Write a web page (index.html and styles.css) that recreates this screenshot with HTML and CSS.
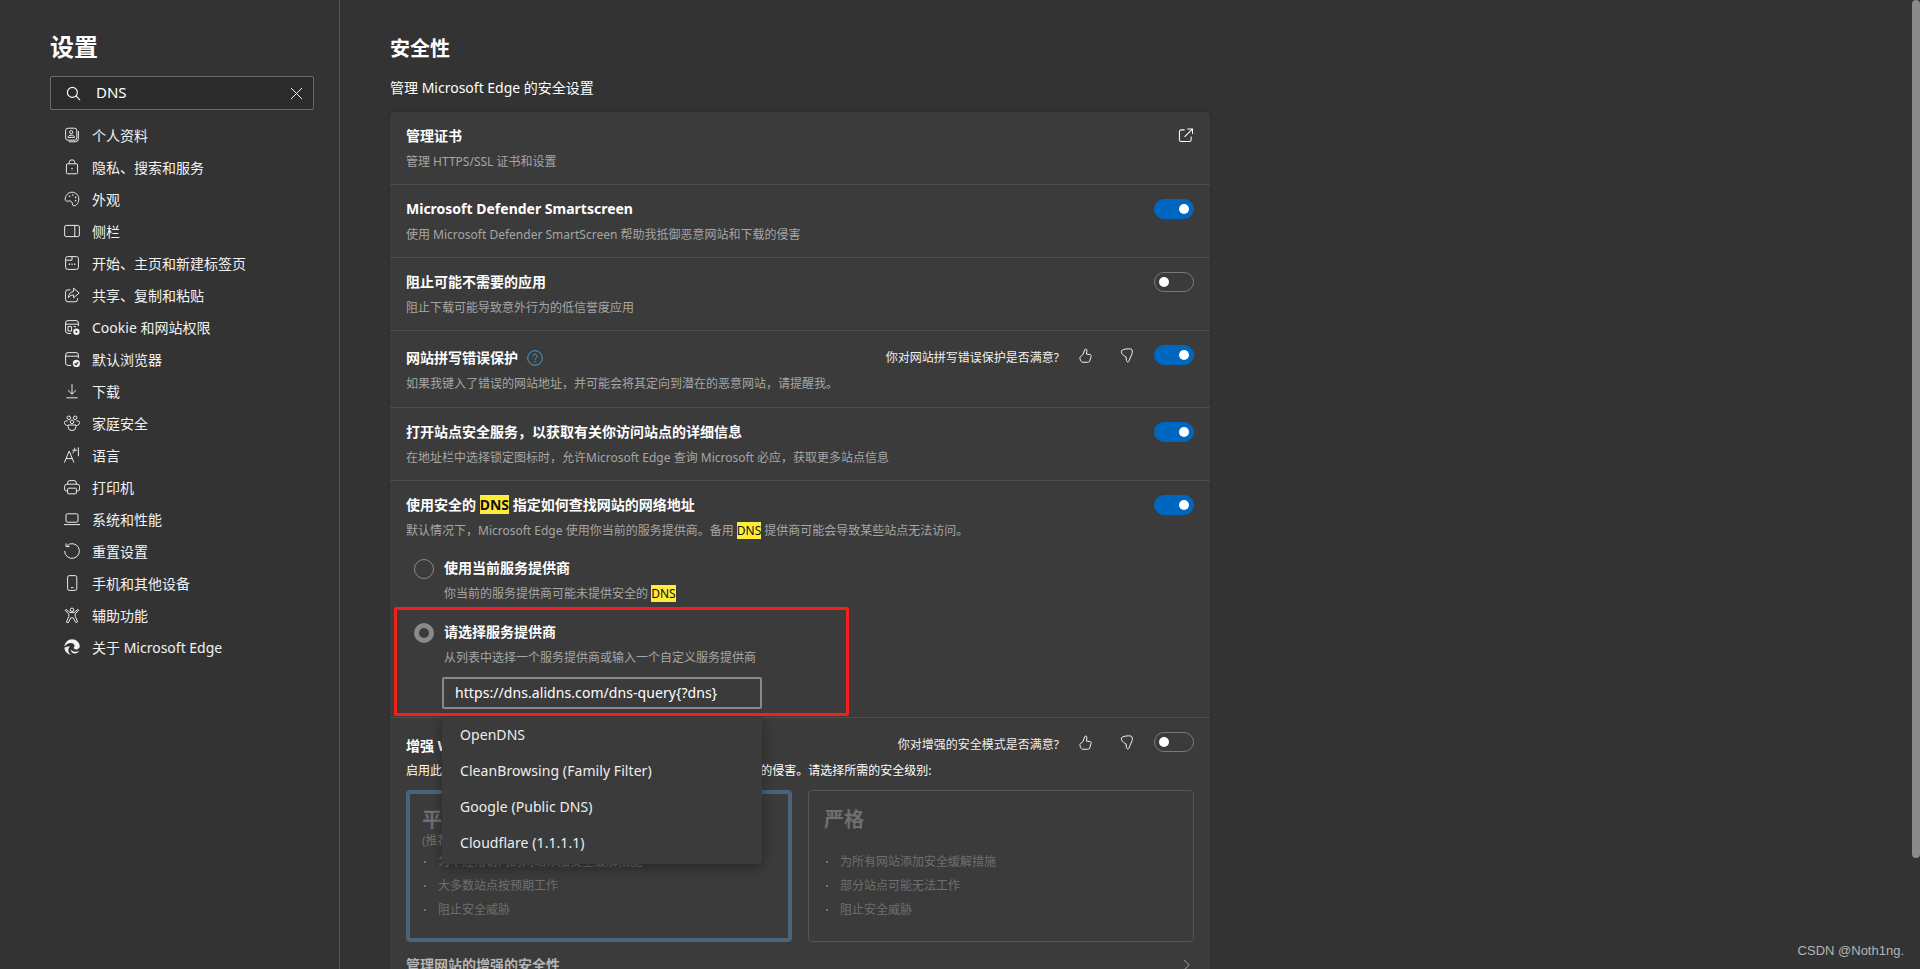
FILE: index.html
```html
<!DOCTYPE html>
<html lang="zh-CN">
  <head>
    <meta charset="UTF-8">
    <title>设置</title>
    <link rel="stylesheet" href="styles.css">
  </head>

  <body>
    <nav class="sidebar">
      <h1 class="sidebar-title">设置</h1>
      <div class="search">
        <svg class="search-icon" viewBox="0 0 16 16"><circle cx="6.8" cy="6.8" r="5.3"/><path d="M10.6 10.6 15 15"/></svg>
        <span class="search-text">DNS</span>
        <svg class="search-clear" viewBox="0 0 14 14"><path d="M1 1 13 13M13 1 1 13"/></svg>
      </div>
      <ul class="menu">
        <li class="menu-item"><svg class="menu-icon" viewBox="0 0 20 20"><rect x="2" y="1.5" width="14" height="15" rx="3"/><path d="M18 5v9.5a4 4 0 0 1-4 4H6"/><circle cx="9" cy="6.5" r="2"/><path d="M5 13c0-2 1.5-2.7 4-2.7s4 .7 4 2.7z"/></svg>个人资料</li>
        <li class="menu-item"><svg class="menu-icon" viewBox="0 0 20 20"><rect x="3" y="6" width="14" height="12.5" rx="1.5"/><path d="M6.5 6V4.5a3.5 3.5 0 0 1 7 0V6"/><circle cx="10" cy="12.2" r="1" class="solid"/></svg>隐私、搜索和服务</li>
        <li class="menu-item"><svg class="menu-icon" viewBox="0 0 20 20"><path d="M10 1.5c4.7 0 8.500 3.800 8.500 8.500 0 4.700-3 8.500-6 8.500-2 0-1.800-2-2.200-3.500C9.800 13 8 12 6 12.500c-2.500.6-4.500.3-4.500-2.200C1.500 5.500 5.300 1.500 10 1.500z"/><circle cx="7" cy="6.5" r="1" class="solid"/><circle cx="11" cy="5" r="1" class="solid"/><circle cx="14.5" cy="8" r="1" class="solid"/><circle cx="14.5" cy="12" r="1" class="solid"/></svg>外观</li>
        <li class="menu-item"><svg class="menu-icon" viewBox="0 0 20 20"><rect x=".8" y="3" width="18.4" height="14" rx="2"/><path d="M13.5 3v14"/></svg>侧栏</li>
        <li class="menu-item"><svg class="menu-icon" viewBox="0 0 20 20"><rect x="2" y="2" width="16" height="16" rx="2.5"/><path d="M2.5 6.5h7.5V2"/><path d="M6 11.5h1.5M9.3 11.5h1.5M12.6 11.5h1.5" class="thick"/></svg>开始、主页和新建标签页</li>
        <li class="menu-item"><svg class="menu-icon" viewBox="0 0 20 20"><path d="M8 3.5H5A3 3 0 0 0 2 6.500v9a3 3 0 0 0 3 3h9a3 3 0 0 0 3-3V14"/><path d="M12 1.500l7 6-7 6v-3.500c-3 0-5 1-6.500 3.500C5.500 9 8 6 12 5.500z"/></svg>共享、复制和粘贴</li>
        <li class="menu-item"><svg class="menu-icon" viewBox="0 0 20 20"><path d="M9 18H5a3 3 0 0 1-3-3V5a3 3 0 0 1 3-3h10a3 3 0 0 1 3 3v4"/><path d="M2 6.5h16"/><path d="M5 9.5h4.5v5.500H5zM12 9.5h3"/><circle cx="15.5" cy="16" r="4" class="solid"/><circle cx="15.5" cy="16" r="1.3" class="hole"/></svg>Cookie 和网站权限</li>
        <li class="menu-item"><svg class="menu-icon" viewBox="0 0 20 20"><path d="M9 18H5a3 3 0 0 1-3-3V5a3 3 0 0 1 3-3h10a3 3 0 0 1 3 3v4"/><path d="M2 6.5h16"/><circle cx="15.5" cy="15.5" r="4.5" class="solid"/><path d="M13.3 15.5l1.7 1.7 2.7-3.2" class="dark"/></svg>默认浏览器</li>
        <li class="menu-item"><svg class="menu-icon" viewBox="0 0 20 20"><path d="M10 1.5V14M5 9l5 5 5-5M3 18.5h14"/></svg>下载</li>
        <li class="menu-item"><svg class="menu-icon" viewBox="0 0 20 20"><circle cx="6" cy="3.5" r="2.2"/><circle cx="14" cy="3.5" r="2.2"/><circle cx="10" cy="8.5" r="2.2"/><path d="M4.5 7.5H2.5C1.200 7.500.5 8.300.5 9.500.5 12 2.500 13 4.500 13M15.500 7.500h2c1.300 0 2 .8 2 2 0 2.500-2 3.500-4 3.500"/><path d="M5 12.5h10v2a5 5 0 0 1-10 0z"/></svg>家庭安全</li>
        <li class="menu-item"><svg class="menu-icon" viewBox="0 0 20 20"><path d="M.5 19.5 6.500 5l6 14.500M2.500 14.500h8"/><path d="M10.5 4h6M13.500 1c0 3-1 5-3 7M18 .5v11"/></svg>语言</li>
        <li class="menu-item"><svg class="menu-icon" viewBox="0 0 20 20"><path d="M4.5 6.500V5A3 3 0 0 1 7.500 2h5a3 3 0 0 1 3 3v1.500"/><path d="M4.500 15H3a2.500 2.500 0 0 1-2.300-2.500V9.500A3 3 0 0 1 3.500 6.500h13a3 3 0 0 1 3 3v3a2.500 2.500 0 0 1-2.500 2.500h-1.500"/><rect x="4.5" y="11.5" width="11" height="7" rx="1"/></svg>打印机</li>
        <li class="menu-item"><svg class="menu-icon" viewBox="0 0 20 20"><rect x="2.5" y="3.5" width="15" height="10.5" rx="1.5"/><path d="M0 17h20"/></svg>系统和性能</li>
        <li class="menu-item"><svg class="menu-icon" viewBox="0 0 20 20"><path d="M3.5 3.500A9.200 9.200 0 1 1 .8 10"/><path d="M2.5.5v4H7"/></svg>重置设置</li>
        <li class="menu-item"><svg class="menu-icon" viewBox="0 0 20 20"><rect x="4.5" y=".8" width="11.5" height="18.4" rx="2"/><path d="M8.5 15.8h3.5"/></svg>手机和其他设备</li>
        <li class="menu-item"><svg class="menu-icon" viewBox="0 0 20 20"><circle cx="10" cy="3.5" r="2.2"/><path d="M2.5 3l5 4h5l5-4 1 1.200-4.500 4.300v3l3 7-2.200 1L11.500 13.500h-3l-3.300 6.500-2.200-1 3-7v-3L1.500 4.200z"/></svg>辅助功能</li>
        <li class="menu-item"><svg class="menu-icon edge" viewBox="0 0 20 20"><path d="M10 .3C15.500.3 19.700 4.500 19.700 9c0 2.500-2 4-4.500 4-1.500 0-3-.7-3-2 0-1 1-1.200 1-2.500C13.200 6.500 11 5 8.500 5 5.500 5 2.500 7 .5 9.500 1 4.500 5 .3 10 .3z"/><path d="M.5 11C.8 16 5 19.700 9.500 19.700c-3-1-4.500-3.500-4-6.500.2-1.500 1-3 2-4C4.500 9.500 2 10 .5 11z"/><path d="M8.500 13c0 3.500 3 5.500 6 5 2-.4 3.700-1.500 4.700-3-1.500 1-3.700 1.200-5.700.8-2-.4-4-1.300-5-2.800z"/></svg>关于 Microsoft Edge</li>
      </ul>
    </nav>

    <main class="content">
      <h2 class="page-title">安全性</h2>
      <p class="page-sub">管理 Microsoft Edge 的安全设置</p>

      <section class="card">
        <div class="row">
          <div class="row-text">
            <div class="row-title">管理证书</div>
            <div class="row-desc">管理 HTTPS/SSL 证书和设置</div>
          </div>
          <svg class="open-icon" viewBox="0 0 16 16"><path d="M7 2H3.500A2 2 0 0 0 1.500 4v8.500a2 2 0 0 0 2 2H12a2 2 0 0 0 2-2V9"/><path d="M7 9.500 15 1.500M10 1h5.500v5.500"/></svg>
        </div>

        <div class="row">
          <div class="row-text">
            <div class="row-title">Microsoft Defender Smartscreen</div>
            <div class="row-desc">使用 Microsoft Defender SmartScreen 帮助我抵御恶意网站和下载的侵害</div>
          </div>
          <div class="toggle on"></div>
        </div>

        <div class="row">
          <div class="row-text">
            <div class="row-title">阻止可能不需要的应用</div>
            <div class="row-desc">阻止下载可能导致意外行为的低信誉度应用</div>
          </div>
          <div class="toggle"></div>
        </div>

        <div class="row row-tall">
          <div class="row-text">
            <div class="row-title">网站拼写错误保护
              <svg class="help-icon" viewBox="0 0 16 16"><circle cx="8" cy="8" r="7.3"/><path d="M5.8 6.2C5.800 5 6.800 4.200 8 4.200s2.200.8 2.200 2c0 1.800-2.200 1.800-2.200 3.600"/><circle cx="8" cy="11.8" r=".7" class="help-dot"/></svg>
            </div>
            <div class="row-desc">如果我键入了错误的网站地址，并可能会将其定向到潜在的恶意网站，请提醒我。</div>
          </div>
          <div class="feedback">
            <span class="feedback-text">你对网站拼写错误保护是否满意?</span>
            <svg class="thumb" viewBox="0 0 14 16"><path d="M1 10 4.500 6.500 6 2C6.500.5 8.500.8 8.500 2.500L8 6.500l4 .5c1 .2 1.300 1 1 2l-1.500 5c-.3 1-1 1.300-2.500 1.300H4C2 15 1 12.500 1 10z"/></svg>
            <svg class="thumb" viewBox="0 0 14 16"><path d="M1.500 3C3 1 9 .5 12 1c1.500 1 1.500 3 1 5l-3 7c-.5 2.500-2.500 2.500-3 .5L6.500 9.500C4 8.500 1 6 1.500 3z"/></svg>
          </div>
          <div class="toggle on"></div>
        </div>

        <div class="row">
          <div class="row-text">
            <div class="row-title">打开站点安全服务，以获取有关你访问站点的详细信息</div>
            <div class="row-desc">在地址栏中选择锁定图标时，允许Microsoft Edge 查询 Microsoft 必应，获取更多站点信息</div>
          </div>
          <div class="toggle on"></div>
        </div>

        <div class="row row-dns">
          <div class="dns-head">
            <div class="row-text">
              <div class="row-title">使用安全的 <mark class="hit">DNS</mark> 指定如何查找网站的网络地址</div>
              <div class="row-desc">默认情况下，Microsoft Edge 使用你当前的服务提供商。备用 <mark class="hit">DNS</mark> 提供商可能会导致某些站点无法访问。</div>
            </div>
            <div class="toggle on"></div>
          </div>

          <div class="option">
            <div class="radio"></div>
            <div class="row-text">
              <div class="row-title">使用当前服务提供商</div>
              <div class="row-desc">你当前的服务提供商可能未提供安全的 <mark class="hit">DNS</mark></div>
            </div>
          </div>

          <div class="option">
            <div class="radio checked"></div>
            <div class="row-text">
              <div class="row-title">请选择服务提供商</div>
              <div class="row-desc">从列表中选择一个服务提供商或输入一个自定义服务提供商</div>
              <div class="dns-input">https://dns.alidns.com/dns-query{?dns}</div>
            </div>
          </div>
        </div>

        <div class="row-enhance">
          <div class="enhance-head">
            <div class="row-title">增强 Web 安全性</div>
            <div class="feedback">
              <span class="feedback-text">你对增强的安全模式是否满意?</span>
              <svg class="thumb" viewBox="0 0 14 16"><path d="M1 10 4.500 6.500 6 2C6.500.5 8.500.8 8.500 2.500L8 6.500l4 .5c1 .2 1.300 1 1 2l-1.500 5c-.3 1-1 1.300-2.500 1.300H4C2 15 1 12.500 1 10z"/></svg>
              <svg class="thumb" viewBox="0 0 14 16"><path d="M1.500 3C3 1 9 .5 12 1c1.500 1 1.500 3 1 5l-3 7c-.5 2.500-2.500 2.500-3 .5L6.500 9.500C4 8.500 1 6 1.500 3z"/></svg>
            </div>
            <div class="toggle"></div>
          </div>
          <p class="enhance-desc">启用此功能可帮助保护你的计算机免受来自 网络 的侵害和恶意软件的侵害。请选择所需的安全级别:</p>
          <div class="levels">
            <div class="level selected">
              <div class="level-name">平衡</div>
              <div class="level-tag">(推荐)</div>
              <ul class="level-list">
                <li>为不经常访问的网站添加安全缓解措施</li>
                <li>大多数站点按预期工作</li>
                <li>阻止安全威胁</li>
              </ul>
            </div>
            <div class="level">
              <div class="level-name">严格</div>
              <ul class="level-list level-list-strict">
                <li>为所有网站添加安全缓解措施</li>
                <li>部分站点可能无法工作</li>
                <li>阻止安全威胁</li>
              </ul>
            </div>
          </div>
        </div>

        <div class="row-manage">
          <span>管理网站的增强的安全性</span>
          <svg class="chevron" viewBox="0 0 8 14"><path d="M1 1l6 6-6 6"/></svg>
        </div>
      </section>
    </main>

    <!-- things lying over the page -->
    <ul class="dropdown">
      <li>OpenDNS</li>
      <li>CleanBrowsing (Family Filter)</li>
      <li>Google (Public DNS)</li>
      <li>Cloudflare (1.1.1.1)</li>
    </ul>
    <div class="red-box"></div>
    <div class="scrollbar"><div class="scroll-thumb"></div></div>
    <div class="watermark">CSDN @Noth1ng.</div>
  </body>
</html>
```

FILE: styles.css
```css
html, body {
  margin: 0;
  height: 969px;
  overflow: hidden;
}

body {
  position: relative;
  display: flex;
  background-color: #333333;
  color: #ffffff;
  font-family: "Noto Sans", "Noto Sans CJK SC", sans-serif;
  font-size: 14px;
}

svg {
  fill: none;
  stroke: currentColor;
  stroke-width: 1.2;
  flex: none;
}

ul, p, h1, h2 {
  margin: 0;
  padding: 0;
  list-style: none;
}

/* sidebar */
.sidebar {
  width: 340px;
  height: 100%;
  flex: none;
  box-sizing: border-box;
  padding: 30px 0 0 50px;
  border-right: 1px solid #555555;
}

.sidebar-title {
  font-size: 24px;
  font-weight: 700;
  line-height: 34px;
}

.search {
  width: 264px;
  height: 34px;
  margin-top: 12px;
  box-sizing: border-box;
  display: flex;
  align-items: center;
  padding: 0 10px 0 15px;
  background-color: #2b2b2b;
  border: 1px solid #6b6b6b;
  border-radius: 2px;
}

.search-icon {
  width: 15px;
  height: 15px;
}

.search-text {
  margin-left: 15px;
  flex: 1;
  font-size: 15px;
  line-height: 20px;
  margin-top: -2px;
}

.search-clear {
  width: 13px;
  height: 13px;
  stroke-width: 1;
}

.menu {
  margin-top: 9px;
  margin-left: -50px;
}

.menu-item {
  height: 32px;
  display: flex;
  align-items: center;
  padding-left: 64px;
  gap: 12px;
  color: #f2f2f2;
}

.menu-icon {
  width: 16px;
  height: 16px;
  stroke-width: 1.2;
}

.menu-icon .solid {
  fill: currentColor;
  stroke: none;
}

.menu-icon .hole {
  fill: #333333;
  stroke: none;
}

.menu-icon .dark {
  stroke: #333333;
  stroke-width: 1.5;
}

.menu-icon .thick {
  stroke-width: 1.8;
}

.edge path {
  fill: currentColor;
  stroke: none;
}

/* main column */
.content {
  margin-left: 50px;
  width: 820px;
  flex: none;
}

.page-title {
  margin-top: 34px;
  font-size: 20px;
  font-weight: 700;
  line-height: 30px;
}

.page-sub {
  margin-top: 14px;
  line-height: 20px;
}

.card {
  margin-top: 14px;
  background-color: #3b3b3b;
  border-radius: 4px;
  box-shadow: 0 0 3px rgba(0, 0, 0, 0.2);
}

.row {
  height: 73px;
  box-sizing: border-box;
  display: flex;
  align-items: flex-start;
  padding: 14px 16px 0;
  border-bottom: 1px solid #4d4d4d;
}

.row-text {
  flex: 1;
  min-width: 0;
}

.row-title {
  font-weight: 700;
  line-height: 20px;
  color: #ffffff;
}

.row-desc {
  margin-top: 6px;
  font-size: 12px;
  line-height: 20px;
  color: #a6a6a6;
}

.row-tall {
  height: 77px;
}

.row-tall .row-title {
  margin-top: 3px;
}

.hit {
  background-color: #ffeb3b;
  color: #111111;
}

.toggle {
  position: relative;
  width: 40px;
  height: 20px;
  flex: none;
  box-sizing: border-box;
  border: 1px solid #7a7a7a;
  border-radius: 10px;
}

.toggle::after {
  content: "";
  position: absolute;
  left: 4px;
  top: 4px;
  width: 10px;
  height: 10px;
  border-radius: 50%;
  background-color: #ffffff;
}

.toggle.on {
  background-color: #0067c0;
  border-color: #0067c0;
}

.toggle.on::after {
  left: 24px;
}

.open-icon {
  width: 15px;
  height: 15px;
  margin: 2px 1px 0 0;
  stroke-width: 1.1;
}

.help-icon {
  width: 16px;
  height: 16px;
  margin-left: 5px;
  vertical-align: -3px;
  color: #4a9ad4;
  stroke-width: 1;
}

.help-dot {
  fill: currentColor;
  stroke: none;
}

.feedback {
  display: flex;
  align-items: center;
  margin-right: 21px;
  height: 20px;
}

.feedback-text {
  font-size: 12px;
  color: #f0f0f0;
  margin-right: 20px;
  padding-top: 3px;
}

.thumb {
  width: 13px;
  height: 15px;
  margin-right: 28px;
  stroke-width: 1;
}

.thumb:last-child {
  margin-right: 0;
}

/* dns block */
.row-dns {
  height: 237px;
  display: block;
}

.dns-head {
  display: flex;
  align-items: flex-start;
}

.option {
  display: flex;
  align-items: flex-start;
  margin-top: 18px;
  padding-left: 8px;
}

.option .row-title {
  margin-top: -1px;
}

.option + .option {
  margin-top: 19px;
}

.radio {
  width: 20px;
  height: 20px;
  margin-right: 10px;
  box-sizing: border-box;
  border: 1px solid #8a8a8a;
  border-radius: 50%;
}

.radio.checked {
  border: 5px solid #8a8a8a;
  background-color: #3b3b3b;
}

.dns-input {
  width: 320px;
  height: 32px;
  margin: 9px 0 0 -2px;
  box-sizing: border-box;
  padding-left: 11px;
  line-height: 28px;
  letter-spacing: 0.07px;
  border: 2px solid #8a8a8a;
  border-radius: 2px;
}

/* enhanced security */
.row-enhance {
  box-sizing: border-box;
  padding: 14px 16px 13px;
}

.enhance-head {
  display: flex;
  align-items: flex-start;
}

.enhance-head .row-title {
  flex: 1;
  margin-top: 4px;
}

.enhance-desc {
  margin-top: 5px;
  font-size: 12px;
  line-height: 20px;
}

.levels {
  display: flex;
  gap: 16px;
  margin-top: 9px;
}

.level {
  flex: 1;
  height: 152px;
  box-sizing: border-box;
  padding: 15px 15px 0;
  border: 1px solid #555555;
  border-radius: 4px;
  color: #6f6f6f;
}

.level.selected {
  border: 4px solid #4a6378;
  padding: 12px 12px 0;
}

.level-name {
  font-size: 20px;
  font-weight: 700;
  line-height: 28px;
}

.level-tag {
  font-size: 12px;
  line-height: 14px;
}

.level-list {
  margin-top: 2px;
  font-size: 12px;
}

.level-list-strict {
  margin-top: 16px;
}

.level-list li {
  position: relative;
  height: 24px;
  line-height: 24px;
  padding-left: 16px;
}

.level-list li::before {
  content: "";
  position: absolute;
  left: 2px;
  top: 11px;
  width: 2px;
  height: 2px;
  background-color: #6f6f6f;
}

.row-manage {
  display: flex;
  justify-content: space-between;
  align-items: center;
  padding: 0 20px 24px 16px;
  font-weight: 700;
  color: #b4b4b4;
  line-height: 20px;
}

.chevron {
  width: 7px;
  height: 12px;
  color: #8a8a8a;
}

/* overlays */
.dropdown {
  position: absolute;
  left: 442px;
  top: 717px;
  width: 320px;
  height: 147px;
  background-color: #3b3b3b;
  border-radius: 0 0 4px 4px;
  box-shadow: 0 4px 12px rgba(0, 0, 0, 0.35);
  color: #eeeeee;
  letter-spacing: 0.07px;
}

.dropdown li {
  height: 36px;
  padding-left: 18px;
  line-height: 36px;
}

.red-box {
  position: absolute;
  left: 394px;
  top: 607px;
  width: 455px;
  height: 109px;
  box-sizing: border-box;
  border: 3px solid #f5201a;
  border-radius: 2px;
}

.scrollbar {
  position: absolute;
  right: 0;
  top: 0;
  width: 8px;
  height: 100%;
}

.scroll-thumb {
  height: 858px;
  background-color: #8a8a8a;
  border-radius: 4px;
}

.watermark {
  position: absolute;
  right: 16px;
  top: 943px;
  font-family: "Liberation Sans", sans-serif;
  font-size: 13px;
  color: #b5b5b5;
}
```
